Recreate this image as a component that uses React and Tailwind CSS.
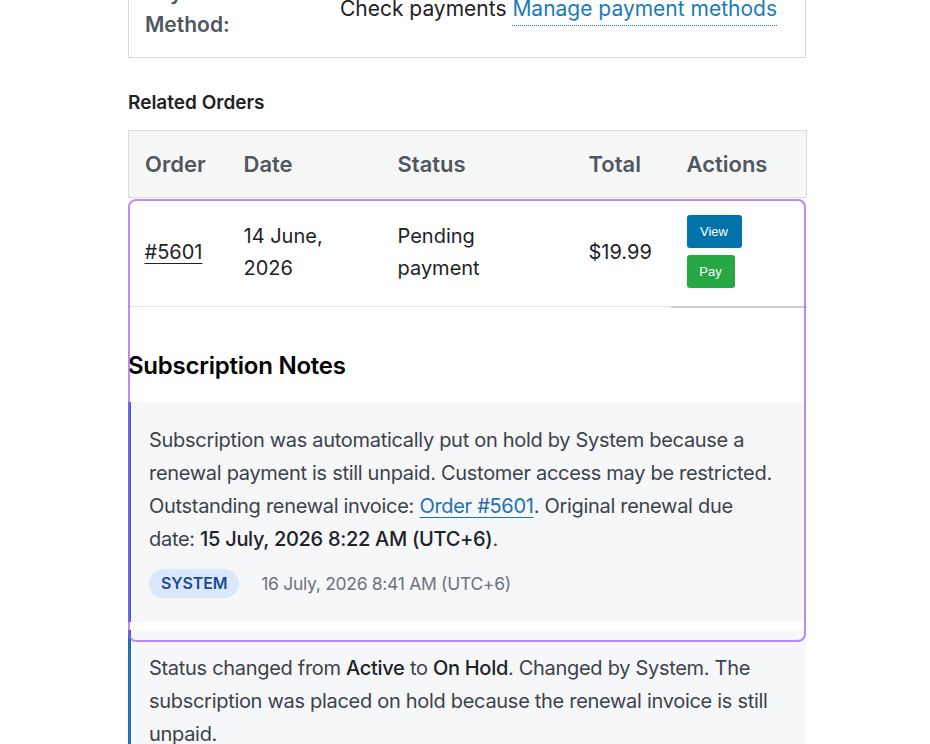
import React from 'react';

const order = {
  number: '#5601',
  date: '14 June, 2026',
  status: 'Pending payment',
  total: '$19.99',
};

const App = () => {
  return (
    <div className="min-h-screen bg-white overflow-hidden" style={{ fontFamily: 'Inter, "Noto Sans", sans-serif' }}>
      <div className="relative w-[678px] ml-[128px] -mt-[40px]">
        {/* Payment method box */}
        <div className="flex items-center border border-[#dcdcde] pl-4 pr-7 py-4 text-[21px] leading-8">
          <div className="w-[120px] font-semibold text-[#50575e]">Payment Method:</div>
          <div className="flex-1 text-right text-[#1d2327]">
            Check payments{' '}
            <a href="#" className="text-[#1a7bb9] border-b border-dotted border-[#1a7bb9] pb-1">
              Manage payment methods
            </a>
          </div>
        </div>

        <h3 className="mt-[31px] mb-[13px] text-[19px] leading-7 font-semibold text-[#1d2327]">Related Orders</h3>

        {/* Orders table */}
        <table className="w-full table-fixed border-collapse text-[20px] leading-8">
          <colgroup>
            <col className="w-[99px]" />
            <col className="w-[154px]" />
            <col className="w-[191px]" />
            <col className="w-[98px]" />
            <col className="w-[136px]" />
          </colgroup>
          <thead>
            <tr className="bg-[#f6f7f7] border border-[#dcdcde] text-[22px]">
              <th className="px-4 py-[17px] text-left font-semibold text-[#50575e]">Order</th>
              <th className="px-4 py-[17px] text-left font-semibold text-[#50575e]">Date</th>
              <th className="px-4 py-[17px] text-left font-semibold text-[#50575e]">Status</th>
              <th className="px-4 py-[17px] text-left font-semibold text-[#50575e]">Total</th>
              <th className="px-4 py-[17px] text-left font-semibold text-[#50575e]">Actions</th>
            </tr>
          </thead>
          <tbody>
            <tr className="border-b border-[#e2e4e7] text-[#1d2327]">
              <td className="px-4 py-[22px] align-middle">
                <a href="#" className="underline underline-offset-4 decoration-1">{order.number}</a>
              </td>
              <td className="px-4 py-[22px] align-middle">{order.date}</td>
              <td className="px-4 py-[22px] align-middle">{order.status}</td>
              <td className="px-4 py-[22px] align-middle">{order.total}</td>
              <td className="px-4 py-[17px] align-middle border-b-2 border-[#d0d0d0]">
                <div className="flex flex-col items-start gap-[7px]">
                  <button className="h-[33px] w-[55px] rounded-[3px] bg-[#0073aa] text-[13px] leading-none font-medium text-white" style={{ fontFamily: '"Liberation Sans", Arial, sans-serif' }}>
                    View
                  </button>
                  <button className="h-[33px] w-[48px] rounded-[3px] bg-[#28a745] text-[13px] leading-none font-medium text-white" style={{ fontFamily: '"Liberation Sans", Arial, sans-serif' }}>
                    Pay
                  </button>
                </div>
              </td>
            </tr>
          </tbody>
        </table>

        <h2 className="mt-[42px] mb-[20px] text-[24px] leading-8 font-semibold text-black tracking-[-0.01em]">Subscription Notes</h2>

        {/* Notes */}
        <div className="flex flex-col gap-2 text-[20px] leading-[33px] text-[#3c434a] tracking-[-0.015em]">
          <div className="bg-[#f6f7f9] border-l-[3px] border-[#2271b1] pl-[18px] pr-6 pt-[22px] pb-[24px]">
            <p>
              Subscription was automatically put on hold by System because a renewal payment is still unpaid.
              Customer access may be restricted. Outstanding renewal invoice:{' '}
              <a href="#" className="text-[#2271b1] underline underline-offset-4 decoration-1">Order #5601</a>. Original
              renewal due date: <strong className="font-medium text-[#1d2327]">15 July, 2026 8:22 AM (UTC+6)</strong>.
            </p>
            <div className="mt-[13px] flex items-center gap-[22px]">
              <span className="rounded-full bg-[#dbe8fb] px-3 py-[2px] text-[16px] leading-[25px] font-semibold text-[#1e4b8f] tracking-[-0.01em]">
                SYSTEM
              </span>
              <span className="text-[17.5px] leading-[29px] text-[#6b7280]">16 July, 2026 8:41 AM (UTC+6)</span>
            </div>
          </div>
          <div className="bg-[#f6f7f9] border-l-[3px] border-[#2271b1] pl-[18px] pr-6 pt-[22px] pb-[22px]">
            <p>
              Status changed from <strong className="font-medium text-[#1d2327]">Active</strong> to{' '}
              <strong className="font-medium text-[#1d2327]">On Hold</strong>. Changed by System. The subscription was
              placed on hold because the renewal invoice is still unpaid.
            </p>
          </div>
        </div>

        {/* Highlight overlay */}
        <div className="pointer-events-none absolute left-0 right-0 top-[239px] h-[443px] rounded-lg border-2 border-[#a855f7]/70" />
      </div>
    </div>
  );
};

export default App;
